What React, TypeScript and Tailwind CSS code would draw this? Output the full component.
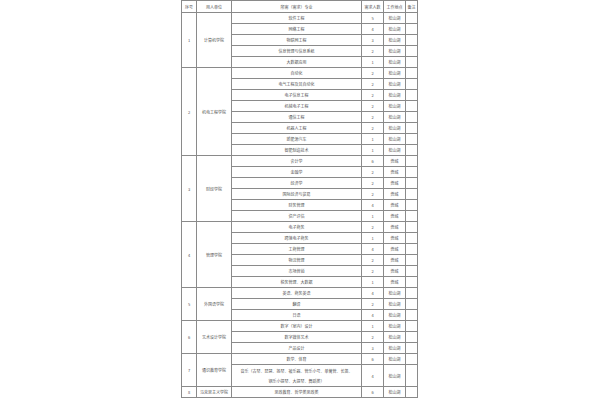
type Row = { major: string; count: string; double?: boolean };
type Dept = { no: string; name: string; place: string; rows: Row[] };

const depts: Dept[] = [
  {
    no: '1',
    name: '计算机学院',
    place: '松山湖',
    rows: [
      { major: '软件工程', count: '5' },
      { major: '网络工程', count: '4' },
      { major: '物联网工程', count: '3' },
      { major: '信息管理与信息系统', count: '2' },
      { major: '大数据应用', count: '1' },
    ],
  },
  {
    no: '2',
    name: '机电工程学院',
    place: '松山湖',
    rows: [
      { major: '自动化', count: '2' },
      { major: '电气工程及其自动化', count: '2' },
      { major: '电子信息工程', count: '2' },
      { major: '机械电子工程', count: '2' },
      { major: '通信工程', count: '2' },
      { major: '机器人工程', count: '2' },
      { major: '新能源汽车', count: '1' },
      { major: '智能制造技术', count: '1' },
    ],
  },
  {
    no: '3',
    name: '财经学院',
    place: '莞城',
    rows: [
      { major: '会计学', count: '6' },
      { major: '金融学', count: '2' },
      { major: '经济学', count: '2' },
      { major: '国际经济与贸易', count: '2' },
      { major: '财务管理', count: '4' },
      { major: '资产评估', count: '1' },
    ],
  },
  {
    no: '4',
    name: '管理学院',
    place: '莞城',
    rows: [
      { major: '电子商务', count: '2' },
      { major: '跨境电子商务', count: '1' },
      { major: '工商管理', count: '4' },
      { major: '物流管理', count: '2' },
      { major: '市场营销', count: '2' },
      { major: '税务管理、大数据', count: '1' },
    ],
  },
  {
    no: '5',
    name: '外国语学院',
    place: '松山湖',
    rows: [
      { major: '英语、商务英语', count: '4' },
      { major: '翻译', count: '2' },
      { major: '日语', count: '4' },
    ],
  },
  {
    no: '6',
    name: '艺术设计学院',
    place: '松山湖',
    rows: [
      { major: '数字（室内）设计', count: '1' },
      { major: '数字媒体艺术', count: '2' },
      { major: '产品设计', count: '3' },
    ],
  },
  {
    no: '7',
    name: '通识教育学院',
    place: '松山湖',
    rows: [
      { major: '数学、体育', count: '6' },
      { major: '', count: '4', double: true },
    ],
  },
  {
    no: '8',
    name: '马克思主义学院',
    place: '松山湖',
    rows: [{ major: '思政教育、哲学类思政类', count: '6' }],
  },
];

const cell = 'border border-[#8a8a8a] p-0 text-center align-middle';

export default function App() {
  return (
    <div className="h-[400px] w-[600px] bg-white pl-[181px]">
      <table
        className="w-[236px] table-fixed border-collapse text-[4px] leading-none text-[#555]"
        style={{ fontFamily: '"Noto Sans CJK SC", "Noto Sans", sans-serif' }}
      >
        <colgroup>
          <col className="w-[15px]" />
          <col className="w-[35px]" />
          <col className="w-[130px]" />
          <col className="w-[22px]" />
          <col className="w-[22px]" />
          <col className="w-[12px]" />
        </colgroup>
        <thead>
          <tr className="h-[12px]">
            <th className={`${cell} font-normal`}>序号</th>
            <th className={`${cell} font-normal`}>用人单位</th>
            <th className={`${cell} font-normal`}>所需（需求）专业</th>
            <th className={`${cell} font-normal`}>需求人数</th>
            <th className={`${cell} font-normal`}>工作地点</th>
            <th className={`${cell} font-normal`}>备注</th>
          </tr>
        </thead>
        <tbody>
          {depts.map((d) =>
            d.rows.map((r, i) => (
              <tr key={d.no + '-' + i} className={r.double ? 'h-[22px]' : 'h-[11px]'}>
                {i === 0 && (
                  <>
                    <td rowSpan={d.rows.length} className={cell}>
                      {d.no}
                    </td>
                    <td rowSpan={d.rows.length} className={cell}>
                      {d.name}
                    </td>
                  </>
                )}
                <td className={`${cell} ${r.double ? 'leading-[10px]' : ''}`}>
                  {r.double ? (
                    <>
                      音乐（古琴、琵琶、扬琴、被乐器、管乐小号、单簧管、长笛、
                      <br />
                      钢乐小提琴、大提琴、舞蹈类）
                    </>
                  ) : (
                    r.major
                  )}
                </td>
                <td className={cell}>{r.count}</td>
                <td className={cell}>{d.place}</td>
                <td className={cell}></td>
              </tr>
            ))
          )}
        </tbody>
      </table>
    </div>
  );
}
